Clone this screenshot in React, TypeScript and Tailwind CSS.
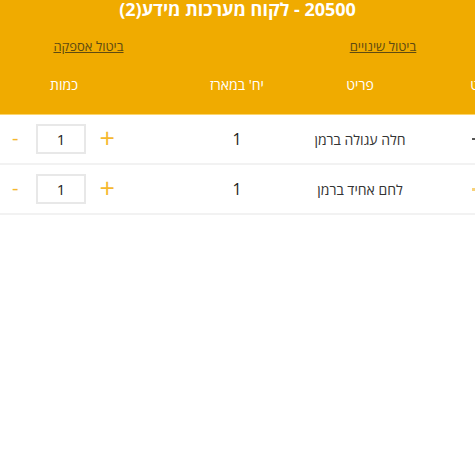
import React from "react";

const rows = [
  { name: "חלה עגולה ברמן", units: "1", qty: "1" },
  { name: "לחם אחיד ברמן", units: "1", qty: "1" },
];

export default function App() {
  return (
    <div
      className="w-[475px] h-[475px] overflow-hidden bg-white"
      style={{ fontFamily: '"Open Sans", "Noto Sans", sans-serif' }}
    >
      <div className="bg-[#f0ab00] border-b border-[#fbd56e] h-[115px] flex flex-col">
        <div dir="rtl" className="h-[20px] flex items-center justify-center text-white font-bold text-[18px] leading-none -mt-[1px]">
          20500 - לקוח מערכות מידע(2)
        </div>
        <div className="flex h-[50px] items-center pt-[2px]">
          <div className="w-[177px] text-center">
            <a dir="rtl" className="underline text-[#5e4a12] text-[13px]">ביטול אספקה</a>
          </div>
          <div className="flex-1" />
          <div className="w-[184px] text-center">
            <a dir="rtl" className="underline text-[#5e4a12] text-[13px]">ביטול שינויים</a>
          </div>
        </div>
        <div className="flex h-[30px] items-center text-white text-[14px] whitespace-nowrap">
          <div dir="rtl" className="w-[128px] shrink-0 text-center">כמות</div>
          <div className="w-[46px] shrink-0" />
          <div dir="rtl" className="w-[126px] shrink-0 text-center">יח' במארז</div>
          <div dir="rtl" className="w-[120px] shrink-0 text-center">פריט</div>
          <div dir="rtl" className="w-[132px] shrink-0 text-center">מק"ט</div>
        </div>
      </div>
      {rows.map((r, i) => (
        <div key={i} className="flex h-[50px] items-center border-b-2 border-[#f2f2f2] text-[#333] whitespace-nowrap">
          <div className="w-[128px] shrink-0 flex items-center">
            <span className="w-[36px] pl-[12px] text-left text-[#f5b82e] text-[20px] leading-none -mt-[2px]">-</span>
            <div className="w-[51px] h-[30px] border-2 border-[#e8e8e8] flex items-center justify-center text-[15px] text-[#222]">
              {r.qty}
            </div>
            <span className="w-[42px] text-center text-[#f5b82e] text-[27px] leading-none -mt-[3px]">+</span>
          </div>
          <div className="w-[46px] shrink-0" />
          <div className="w-[126px] shrink-0 text-center text-[16px] text-[#222]">{r.units}</div>
          <div dir="rtl" className="w-[120px] shrink-0 text-center text-[14px]">{r.name}</div>
          <div className="w-[132px] shrink-0 flex justify-start pl-[52px]">
            <span className={i === 0 ? "w-[3px] h-[2px] bg-[#555]" : "w-[3px] h-[3px] bg-[#f7d27a]"} />
          </div>
        </div>
      ))}
    </div>
  );
}
